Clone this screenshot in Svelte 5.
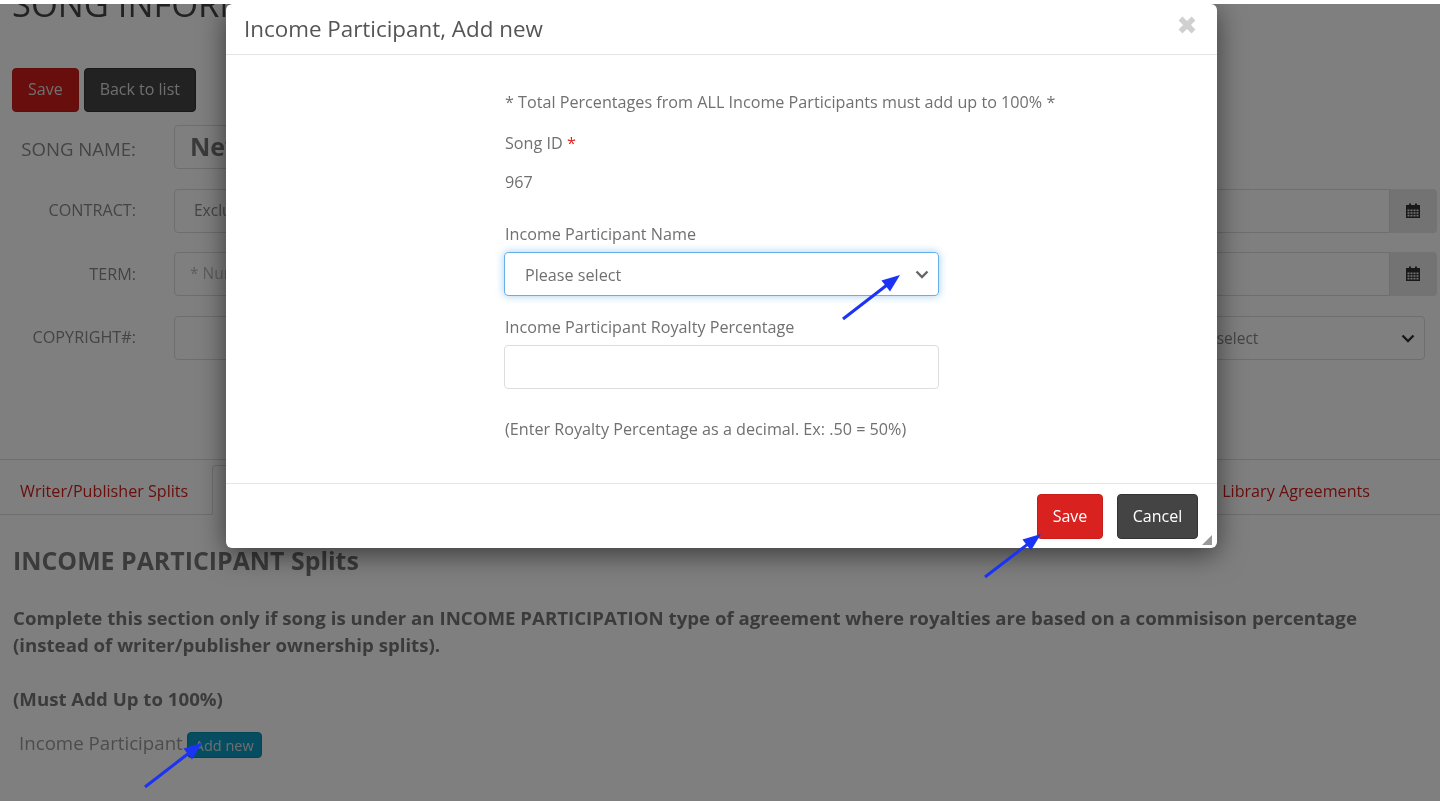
<script>
  const arrows = [
    { x1: 843, y1: 319, x2: 900, y2: 275 },
    { x1: 985, y1: 577, x2: 1041, y2: 534 },
    { x1: 145, y1: 787, x2: 202, y2: 743 }
  ];
  function head(a) {
    const ang = Math.atan2(a.y2 - a.y1, a.x2 - a.x1);
    const l = 18, w = 7;
    const bx = a.x2 - l * Math.cos(ang), by = a.y2 - l * Math.sin(ang);
    const px = -Math.sin(ang) * w, py = Math.cos(ang) * w;
    return `${a.x2},${a.y2} ${bx + px},${by + py} ${bx - px},${by - py}`;
  }
</script>

<div class="shot">
  <main class="page">
    <h1>SONG INFORMATION</h1>
    <div class="actions">
      <button class="btn red">Save</button>
      <button class="btn dark">Back to list</button>
    </div>

    <div class="form">
      <div class="row">
        <span class="lab big">SONG NAME:</span>
        <div class="input name">New Song</div>
      </div>
      <div class="row tight">
        <span class="lab">CONTRACT:</span>
        <div class="input">Exclusive</div>
        <div class="cal">
          <svg viewBox="0 0 16 17" width="16" height="17"><path d="M1 3h3V1.500h2V3h4V1.500h2V3h3v13H1z M2 7v8h12V7z" fill="#333"/><path d="M2 7h12v8H2z M5 7v8 M8 7v8 M11 7v8 M2 9.700h12 M2 12.300h12" fill="none" stroke="#333" stroke-width="1"/></svg>
        </div>
      </div>
      <div class="row">
        <span class="lab term">TERM:</span>
        <div class="input ph">* Number of years</div>
        <div class="cal">
          <svg viewBox="0 0 16 17" width="16" height="17"><path d="M1 3h3V1.500h2V3h4V1.500h2V3h3v13H1z M2 7v8h12V7z" fill="#333"/><path d="M2 7h12v8H2z M5 7v8 M8 7v8 M11 7v8 M2 9.700h12 M2 12.300h12" fill="none" stroke="#333" stroke-width="1"/></svg>
        </div>
      </div>
      <div class="row last">
        <span class="lab">COPYRIGHT#:</span>
        <div class="input"></div>
        <div class="input sel">Please select
          <svg class="chev" viewBox="0 0 14 9" width="14" height="9"><path d="M1.500 1.500 7 7l5.500-5.500" fill="none" stroke="#333" stroke-width="2.400"/></svg>
        </div>
      </div>
    </div>

    <nav class="tabs">
      <span class="tab">Writer/Publisher Splits</span>
      <span class="tab active">Income Participant Splits</span>
      <span class="tab end">Library Agreements</span>
    </nav>

    <section class="splits">
      <h2>INCOME PARTICIPANT Splits</h2>
      <p class="strong">Complete this section only if song is under an INCOME PARTICIPATION type of agreement where royalties are based on a commisison percentage (instead of writer/publisher ownership splits).</p>
      <p class="strong must">(Must Add Up to 100%)</p>
      <div class="add">
        <span>Income Participant</span>
        <button class="btn teal">Add new</button>
      </div>
    </section>
  </main>

  <div class="backdrop"></div>

  <div class="modal">
    <header class="m-head">
      <h3>Income Participant, Add new</h3>
      <svg class="close" viewBox="0 0 20 20" width="20" height="20"><path d="M3.500 3.500l13 13m0-13l-13 13" fill="none" stroke="#d0d0d0" stroke-width="5.500"/></svg>
    </header>
    <div class="m-body">
      <p class="note">* Total Percentages from ALL Income Participants must add up to 100% *</p>
      <p class="flabel id">Song ID <b>*</b></p>
      <p class="val">967</p>
      <p class="flabel pname">Income Participant Name</p>
      <div class="field focus">Please select
        <svg class="chev" viewBox="0 0 14 9" width="14" height="9"><path d="M1.500 1.500 7 7l5.500-5.500" fill="none" stroke="#666" stroke-width="2.400"/></svg>
      </div>
      <p class="flabel pct">Income Participant Royalty Percentage</p>
      <div class="field"></div>
      <p class="hint">(Enter Royalty Percentage as a decimal. Ex: .50 = 50%)</p>
    </div>
    <footer class="m-foot">
      <button class="mbtn save">Save</button>
      <button class="mbtn cancel">Cancel</button>
      <svg class="grip" viewBox="0 0 10 10" width="10" height="10"><path d="M10 0v10H0z" fill="#999"/></svg>
    </footer>
  </div>

  <svg class="arrows" viewBox="0 0 1440 804" width="1440" height="804">
    {#each arrows as a}
      <line x1={a.x1} y1={a.y1} x2={a.x2 - (a.x2 - a.x1) * 0.2} y2={a.y2 - (a.y2 - a.y1) * 0.2} stroke="#1a33f5" stroke-width="3"/>
      <polygon points={head(a)} fill="#1a33f5"/>
    {/each}
  </svg>
</div>

<style>
  :global(body) { margin: 0; background: #fff; }
  .shot {
    position: absolute;
    top: 4px; left: 0;
    width: 1440px; height: 797px;
    overflow: hidden;
    background: #fff;
    font-family: "Open Sans", sans-serif;
    color: #888;
    filter: blur(.35px);
  }
  .page { height: 100%; }
  h1 { margin: -20px 0 0 12px; font-size: 34.500px; line-height: 40px; font-weight: 400; color: #444; height: 40px; white-space: nowrap; }
  .actions { display: flex; gap: 5px; padding: 44px 0 0 12px; }
  .btn { font-family: inherit; border-radius: 4px; cursor: pointer; }
  .actions .btn { height: 44px; font-size: 16px; padding: 0 15px 2px; border: 1px solid transparent; color: #ddd; }
  .red { background: #d11f1c; border-color: #c01a18 !important; }
  .dark { background: #444; border-color: #333 !important; }
  .form { padding-top: 13px; }
  .row { display: flex; height: 44px; margin-bottom: 20px; padding-right: 3px; }
  .row.tight { margin-bottom: 19px; }
  .row.last { margin-bottom: 0; padding-right: 15px; }
  .lab { width: 136px; text-align: right; font-size: 16.200px; line-height: 42px; margin-right: 38px; flex: none; }
  .lab.term { line-height: 44px; }
  .lab.big { font-size: 18.600px; line-height: 48px; }
  .input { flex: 1; box-sizing: border-box; border: 1px solid #ddd; border-radius: 4px 0 0 4px; background: #fff; padding-left: 19px; font-size: 15.500px; line-height: 41px; color: #888; }
  .last .input { border-radius: 4px; }
  .name { flex: none; width: 900px; font-size: 25px; font-weight: 700; padding-left: 15px; border-radius: 4px; color: #777; }
  .ph { color: #bbb; padding-left: 15px; }
  .cal { width: 47px; flex: none; background: #e6e6e6; border-radius: 0 4px 4px 0; display: flex; align-items: center; justify-content: center; }
  .cal svg { margin: -2px 2px 0 0; }
  .sel { position: relative; flex: none; width: 280px; margin-left: 20px; padding-left: 20px; line-height: 42px; }
  .chev { position: absolute; right: 9px; top: 50%; margin-top: -4px; }
  .tabs { display: flex; box-sizing: border-box; height: 56px; margin-top: 99px; border-top: 1px solid #ddd; border-bottom: 1px solid #ddd; font-size: 16.150px; line-height: 62px; }
  .tab { padding-left: 20px; color: #d11f1c; }
  .tab.active { margin: 5px 0 -1px 24px; border: 1px solid #ddd; border-bottom-color: #fff; border-radius: 4px 4px 0 0; width: 300px; color: #888; line-height: 50px; background: #fff; padding: 0; text-align: center; box-sizing: border-box; }
  .tab.end { margin-left: auto; padding: 0 70px 0 0; }
  .splits { padding: 28px 13px 0; }
  h2 { margin: 0; font-size: 24.900px; line-height: 34px; font-weight: 700; color: #777; }
  .strong { margin: 0; font-size: 18.650px; line-height: 27px; font-weight: 700; color: #777; }
  h2 + .strong { margin-top: 27px; }
  .must { margin-top: 27px; }
  .add { display: flex; align-items: center; gap: 4px; margin: 16px 0 0 6px; font-size: 18.700px; line-height: 26px; color: #999; }
  .teal { height: 26px; padding: 0 7px; margin-top: 4px; font-size: 14.500px; border: 1px solid #0a8ab0; background: #0d9bc4; color: #ddd; }

  .backdrop { position: absolute; inset: 0; background: rgba(0,0,0,.5); }

  .modal {
    position: absolute; left: 226px; top: 0;
    box-sizing: border-box;
    width: 991px; height: 544px;
    background: #fff;
    border-radius: 6px;
    box-shadow: 0 6px 28px rgba(0,0,0,.55);
    display: flex; flex-direction: column;
    font-size: 16.160px;
    color: #707070;
  }
  .m-head { height: 51px; flex: none; box-sizing: border-box; border-bottom: 1px solid #e5e5e5; display: flex; align-items: center; justify-content: space-between; padding: 0 20px 0 18px; }
  h3 { margin: 0; font-size: 22.400px; font-weight: 400; color: #555; line-height: 49px; height: 50px; }
  .close { margin-top: -8px; }
  .m-body { flex: 1; padding: 0 0 0 279px; }
  .m-body p { margin: 0; line-height: 24px; }
  .note { padding-top: 35px; }
  .id { padding-top: 17px; }
  .id b { color: #e0201c; font-weight: 400; }
  .val { padding-top: 15px; }
  .pname { padding-top: 28px; }
  .field { position: relative; box-sizing: border-box; width: 435px; height: 44px; margin: 6px 0 0 -1px; border: 1px solid #ddd; border-radius: 4px; padding-left: 20px; line-height: 44px; }
  .field.focus { border-color: #66afe9; box-shadow: 0 0 8px rgba(102,175,233,.6); }
  .pct { padding-top: 19px; }
  .hint { padding-top: 28px; }
  .m-foot { height: 65px; flex: none; box-sizing: border-box; border-top: 1px solid #e5e5e5; display: flex; justify-content: flex-end; align-items: flex-start; gap: 14px; padding: 10px 19px 0 0; position: relative; }
  .mbtn { font-family: inherit; height: 45px; font-size: 16px; color: #fff; border-radius: 4px; cursor: pointer; padding: 0 0 2px; }
  .save { width: 66px; background: #d9221f; border: 1px solid #c81e1b; }
  .cancel { width: 81px; background: #444; border: 1px solid #333; }
  .grip { position: absolute; right: 5px; bottom: 3px; }
  .arrows { position: absolute; left: 0; top: -4px; pointer-events: none; }
</style>
